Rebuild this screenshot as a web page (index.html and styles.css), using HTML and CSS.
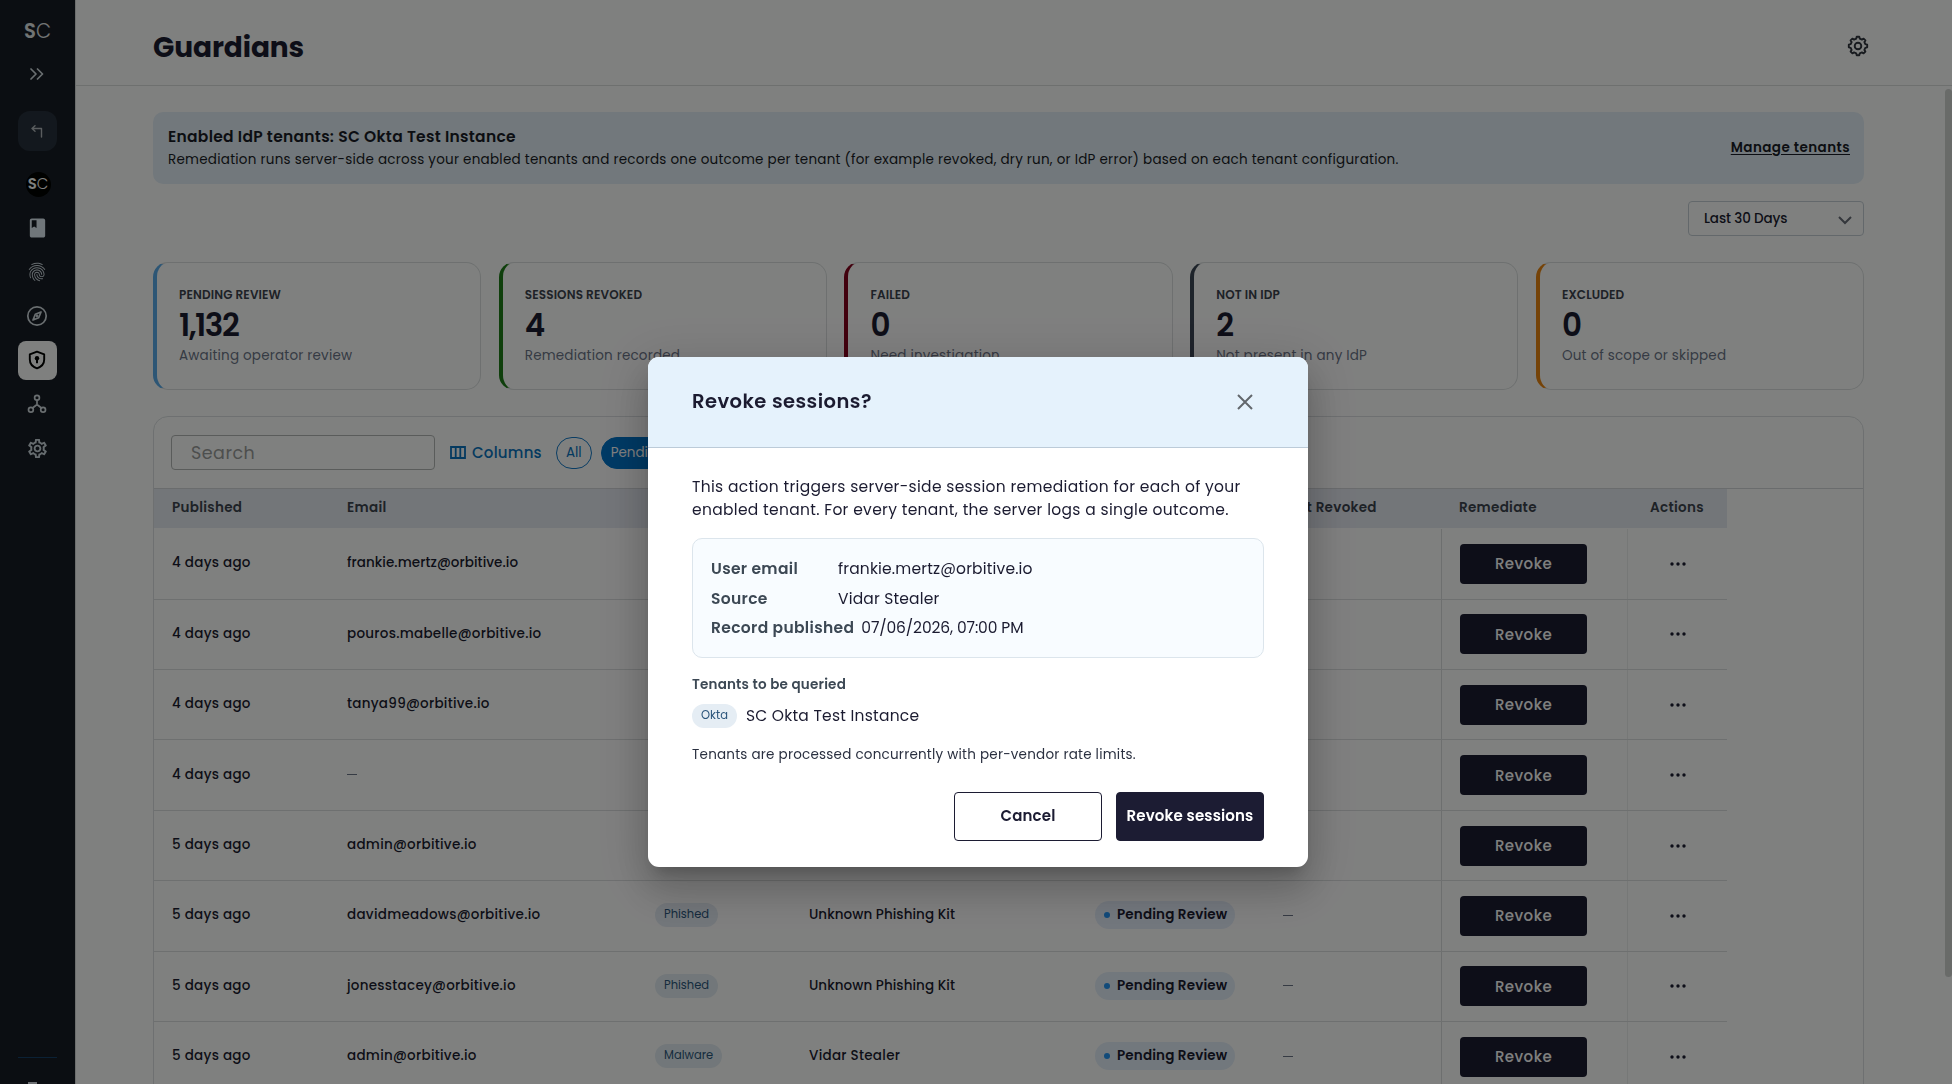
FILE: index.html
```html
<!DOCTYPE html>
<html lang="en">
<head>
<meta charset="utf-8">
<title>Guardians</title>
<link rel="stylesheet" href="styles.css">
</head>
<body>
<svg class="defs" width="0" height="0">
  <symbol id="dots" viewBox="0 0 16 6"><circle cx="2" cy="3" r="1.7"/><circle cx="8" cy="3" r="1.7"/><circle cx="14" cy="3" r="1.7"/></symbol>
</svg>
<div class="app">
  <nav class="sidebar">
    <div class="nav-item"><span class="logo"><b>S</b>C</span></div>
    <div class="nav-item">
      <svg width="14" height="12" viewBox="0 0 14 12" class="line"><path d="M1 1l5 5-5 5M7.500 1l5 5-5 5"/></svg>
    </div>
    <div class="nav-back">
      <svg width="12" height="13" viewBox="0 0 12 13" class="line thin"><path d="M4 .8L1 3.500l3 2.700M1 3.500h9.500V12"/></svg>
    </div>
    <div class="nav-item"><span class="org"><span class="logo small"><b>S</b>C</span></span></div>
    <div class="nav-item"><svg width="23" height="24" viewBox="0 0 24 24" class="fill book"><path d="M18 2H6c-1.100 0-2 .9-2 2v16c0 1.100.9 2 2 2h12c1.100 0 2-.9 2-2V4c0-1.100-.9-2-2-2zM6 4h5v8l-2.500-1.500L6 12V4z"/></svg></div>
    <div class="nav-item"><svg width="22" height="22" viewBox="0 0 24 24" class="fill"><path d="M17.81 4.47c-.08 0-.16-.02-.23-.06C15.66 3.42 14 3 12.01 3c-1.98 0-3.86.47-5.57 1.41-.24.13-.54.04-.68-.2-.13-.24-.04-.55.2-.68C7.82 2.52 9.86 2 12.01 2c2.13 0 3.99.47 6.03 1.52.25.13.34.43.21.67-.09.18-.26.28-.44.28zM3.5 9.72c-.1 0-.2-.03-.29-.09-.23-.16-.28-.47-.12-.7.99-1.4 2.25-2.5 3.75-3.27C9.98 4.04 14 4.03 17.15 5.65c1.5.77 2.76 1.86 3.75 3.25.16.22.11.54-.12.7-.23.16-.54.11-.7-.12-.9-1.26-2.04-2.25-3.39-2.94-2.87-1.47-6.54-1.47-9.4.01-1.36.7-2.5 1.7-3.4 2.96-.08.14-.23.21-.39.21zm6.25 12.07c-.13 0-.26-.05-.35-.15-.87-.87-1.34-1.43-2.01-2.64-.69-1.23-1.05-2.73-1.05-4.34 0-2.97 2.54-5.39 5.66-5.39s5.66 2.42 5.66 5.39c0 .28-.22.5-.5.5s-.5-.22-.5-.5c0-2.42-2.09-4.39-4.66-4.39-2.57 0-4.66 1.97-4.66 4.39 0 1.44.32 2.77.93 3.85.64 1.15 1.08 1.64 1.85 2.42.19.2.19.51 0 .71-.11.1-.24.15-.37.15zm7.17-1.85c-1.19 0-2.24-.3-3.1-.89-1.49-1.01-2.38-2.65-2.38-4.39 0-.28.22-.5.5-.5s.5.22.5.5c0 1.41.72 2.74 1.94 3.56.71.48 1.54.71 2.54.71.24 0 .64-.03 1.04-.1.27-.05.53.13.58.41.05.27-.13.53-.41.58-.57.11-1.07.12-1.21.12zM14.91 22c-.04 0-.09-.01-.13-.02-1.59-.44-2.63-1.03-3.72-2.1-1.4-1.39-2.17-3.24-2.17-5.22 0-1.62 1.38-2.94 3.08-2.94 1.7 0 3.08 1.32 3.08 2.94 0 1.07.93 1.94 2.08 1.94s2.08-.87 2.08-1.94c0-3.77-3.25-6.83-7.25-6.83-2.84 0-5.44 1.58-6.61 4.03-.39.81-.59 1.76-.59 2.8 0 .78.07 2.01.67 3.61.1.26-.03.55-.29.64-.26.1-.55-.04-.64-.29-.49-1.31-.73-2.61-.73-3.96 0-1.2.23-2.29.68-3.24 1.33-2.79 4.28-4.6 7.51-4.6 4.55 0 8.25 3.51 8.25 7.83 0 1.62-1.38 2.94-3.08 2.94s-3.08-1.32-3.08-2.94c0-1.07-.93-1.94-2.08-1.94s-2.08.87-2.08 1.94c0 1.71.66 3.31 1.87 4.51.95.94 1.86 1.46 3.27 1.85.27.07.42.35.35.61-.05.23-.26.38-.47.38z"/></svg></div>
    <div class="nav-item"><svg width="22" height="22" viewBox="0 0 22 22" class="line"><circle cx="11" cy="11" r="9.200"/><path d="M15 7l-2.300 5.700L7 15l2.300-5.700z"/><circle cx="11" cy="11" r=".6"/></svg></div>
    <div class="nav-item"><span class="active"><svg width="18" height="20" viewBox="0 0 18 20" class="shield"><path class="outline" d="M9 1.600L1.800 4.400v5.200c0 4 2.900 7.400 7.200 8.700 4.300-1.300 7.200-4.700 7.200-8.700V4.400z"/><circle cx="9" cy="8.300" r="2.200"/><path d="M8 9h2v4.300H8z"/></svg></span></div>
    <div class="nav-item"><svg width="20" height="20" viewBox="0 0 20 20" class="line"><circle cx="10" cy="3.700" r="2.400"/><circle cx="3.900" cy="15.700" r="2.400"/><circle cx="16.100" cy="15.700" r="2.400"/><path d="M10 6.200v4.300M5.600 14L10 10.500l4.400 3.500"/></svg></div>
    <div class="nav-item"><svg width="23" height="23" viewBox="0 0 24 24" class="fill"><path d="M19.43 12.98c.04-.32.07-.64.07-.98 0-.34-.03-.66-.07-.98l2.11-1.65c.19-.15.24-.42.12-.64l-2-3.46c-.09-.16-.26-.25-.44-.25-.06 0-.12.01-.17.03l-2.49 1c-.52-.4-1.08-.73-1.69-.98l-.38-2.65C14.46 2.18 14.25 2 14 2h-4c-.25 0-.46.18-.49.42l-.38 2.65c-.61.25-1.17.59-1.69.98l-2.49-1c-.06-.02-.12-.03-.18-.03-.17 0-.34.09-.43.25l-2 3.46c-.13.22-.07.49.12.64l2.11 1.65c-.04.32-.07.65-.07.98 0 .33.03.66.07.98l-2.11 1.65c-.19.15-.24.42-.12.64l2 3.46c.09.16.26.25.44.25.06 0 .12-.01.17-.03l2.49-1c.52.4 1.08.73 1.69.98l.38 2.65c.03.24.24.42.49.42h4c.25 0 .46-.18.49-.42l.38-2.65c.61-.25 1.17-.59 1.69-.98l2.49 1c.06.02.12.03.18.03.17 0 .34-.09.43-.25l2-3.46c.12-.22.07-.49-.12-.64l-2.11-1.65zm-1.98-1.71c.04.31.05.52.05.73 0 .21-.02.43-.05.73l-.14 1.13.89.7 1.08.84-.7 1.21-1.27-.51-1.04-.42-.9.68c-.43.32-.84.56-1.25.73l-1.06.43-.16 1.13-.2 1.35h-1.4l-.19-1.35-.16-1.13-1.06-.43c-.43-.18-.83-.41-1.23-.71l-.91-.7-1.06.43-1.27.51-.7-1.21 1.08-.84.89-.7-.14-1.13c-.03-.31-.05-.54-.05-.74s.02-.43.05-.73l.14-1.13-.89-.7-1.08-.84.7-1.21 1.27.51 1.04.42.9-.68c.43-.32.84-.56 1.25-.73l1.06-.43.16-1.13.2-1.35h1.39l.19 1.35.16 1.13 1.06.43c.43.18.83.41 1.23.71l.91.7 1.06-.43 1.27-.51.7 1.21-1.07.85-.89.7.14 1.13zM12 8c-2.21 0-4 1.79-4 4s1.79 4 4 4 4-1.79 4-4-1.79-4-4-4zm0 6c-1.1 0-2-.9-2-2s.9-2 2-2 2 .9 2 2-.9 2-2 2z"/></svg></div>
    <div class="nav-foot"><span class="foot-mark"></span></div>
  </nav>

  <div class="page">
    <header class="page-head">
      <h1>Guardians</h1>
      <svg width="22" height="22" viewBox="-11 -11 22 22" class="head-gear"><path d="M-1.800-7.300L-1.300-9.200H1.300L1.800-7.300L3.900-6.400L5.600-7.400L7.400-5.600L6.400-3.900L7.300-1.800L9.200-1.300V1.300L7.300 1.800L6.400 3.900L7.400 5.600L5.600 7.400L3.900 6.400L1.800 7.300L1.300 9.200H-1.300L-1.800 7.300L-3.900 6.400L-5.600 7.400L-7.400 5.600L-6.400 3.900L-7.300 1.800L-9.200 1.300V-1.300L-7.300-1.800L-6.400-3.900L-7.400-5.600L-5.600-7.400L-3.900-6.400Z"/><circle r="3.300"/></svg>
    </header>
    <main class="content">
      <section class="banner">
        <div>
          <h2>Enabled IdP tenants: SC Okta Test Instance</h2>
          <p>Remediation runs server-side across your enabled tenants and records one outcome per tenant (for example revoked, dry run, or IdP error) based on each tenant configuration.</p>
        </div>
        <a class="manage">Manage tenants</a>
      </section>
      <div class="range-row">
        <div class="select"><span>Last 30 Days</span><svg width="14" height="9" viewBox="0 0 14 9"><path d="M1 1l6 6 6-6"/></svg></div>
      </div>
      <section class="cards">
        <article class="card blue"><h3>Pending Review</h3><strong class="many">1,132</strong><p>Awaiting operator review</p></article>
        <article class="card green"><h3>Sessions Revoked</h3><strong>4</strong><p>Remediation recorded</p></article>
        <article class="card red"><h3>Failed</h3><strong>0</strong><p>Need investigation</p></article>
        <article class="card slate"><h3>Not in IdP</h3><strong>2</strong><p>Not present in any IdP</p></article>
        <article class="card orange"><h3>Excluded</h3><strong>0</strong><p>Out of scope or skipped</p></article>
      </section>
      <section class="panel">
        <div class="toolbar">
          <div class="search">Search</div>
          <div class="columns"><svg width="16" height="13" viewBox="0 0 16 13"><path d="M1 1h14v11H1zM5.700 1v11M10.300 1v11"/></svg>Columns</div>
          <span class="chip">All</span>
          <span class="chip on">Pending Review</span>
        </div>
        <div class="table">
          <div class="tr th"><span>Published</span><span>Email</span><span>Type</span><span>Source</span><span>Status</span><span>Last Revoked</span><span>Remediate</span><span class="mid">Actions</span></div>
          <div class="tr"><span>4 days ago</span><span class="tight">frankie.mertz@orbitive.io</span><span></span><span></span><span></span><span></span><span class="rule"><button>Revoke</button></span><span class="rule faint mid"><svg width="16" height="6"><use href="#dots"/></svg></span></div>
          <div class="tr"><span>4 days ago</span><span>pouros.mabelle@orbitive.io</span><span></span><span></span><span></span><span></span><span class="rule"><button>Revoke</button></span><span class="rule faint mid"><svg width="16" height="6"><use href="#dots"/></svg></span></div>
          <div class="tr"><span>4 days ago</span><span>tanya99@orbitive.io</span><span></span><span></span><span></span><span></span><span class="rule"><button>Revoke</button></span><span class="rule faint mid"><svg width="16" height="6"><use href="#dots"/></svg></span></div>
          <div class="tr"><span>4 days ago</span><span><i class="dash"></i></span><span></span><span></span><span></span><span></span><span class="rule"><button>Revoke</button></span><span class="rule faint mid"><svg width="16" height="6"><use href="#dots"/></svg></span></div>
          <div class="tr"><span>5 days ago</span><span>admin@orbitive.io</span><span></span><span></span><span></span><span></span><span class="rule"><button>Revoke</button></span><span class="rule faint mid"><svg width="16" height="6"><use href="#dots"/></svg></span></div>
          <div class="tr"><span>5 days ago</span><span>davidmeadows@orbitive.io</span><span><em class="tag">Phished</em></span><span class="tight">Unknown Phishing Kit</span><span><em class="status">Pending Review</em></span><span><i class="dash"></i></span><span class="rule"><button>Revoke</button></span><span class="rule faint mid"><svg width="16" height="6"><use href="#dots"/></svg></span></div>
          <div class="tr"><span>5 days ago</span><span>jonesstacey@orbitive.io</span><span><em class="tag">Phished</em></span><span class="tight">Unknown Phishing Kit</span><span><em class="status">Pending Review</em></span><span><i class="dash"></i></span><span class="rule"><button>Revoke</button></span><span class="rule faint mid"><svg width="16" height="6"><use href="#dots"/></svg></span></div>
          <div class="tr"><span>5 days ago</span><span>admin@orbitive.io</span><span><em class="tag">Malware</em></span><span>Vidar Stealer</span><span><em class="status">Pending Review</em></span><span><i class="dash"></i></span><span class="rule"><button>Revoke</button></span><span class="rule faint mid"><svg width="16" height="6"><use href="#dots"/></svg></span></div>
        </div>
      </section>
    </main>
    <div class="scroll-thumb"></div>
  </div>
</div>

<div class="overlay">
  <section class="modal">
    <header class="modal-head">
      <h2>Revoke sessions?</h2>
      <svg width="18" height="18" viewBox="0 0 18 18"><path d="M2 2l14 14M16 2L2 16"/></svg>
    </header>
    <div class="modal-body">
      <p class="lead">This action triggers server-side session remediation for each of your<br>enabled tenant. For every tenant, the server logs a single outcome.</p>
      <dl class="facts">
        <div><dt>User email</dt><dd>frankie.mertz@orbitive.io</dd></div>
        <div><dt>Source</dt><dd>Vidar Stealer</dd></div>
        <div><dt>Record published</dt><dd class="date">07/06/2026, 07:00 PM</dd></div>
      </dl>
      <h3>Tenants to be queried</h3>
      <div class="tenant"><em class="tag">Okta</em><span>SC Okta Test Instance</span></div>
      <p class="note">Tenants are processed concurrently with per-vendor rate limits.</p>
      <div class="actions"><button class="btn">Cancel</button><button class="btn primary">Revoke sessions</button></div>
    </div>
  </section>
</div>
</body>
</html>
```
FILE: styles.css
```css
* { box-sizing: border-box; }
html, body { margin: 0; height: 100%; overflow: hidden; }
body {
  font-family: Poppins, Inter, sans-serif;
  font-size: 13.5px;
  letter-spacing: .24px;
  color: #1b1b30;
  background: #fff;
}
h1, h2, h3, p, dl, dd { margin: 0; }
em, i { font-style: normal; }
svg { display: block; flex: none; }
.defs { position: absolute; }
button { font-family: inherit; border: 0; padding: 0; }

.app { display: flex; height: 1084px; }

/* Sidebar */
.sidebar {
  width: 76px; flex: none;
  display: flex; flex-direction: column;
  padding-top: 8px;
  background: #171b25;
  border-right: 1px solid #d8dada;
  color: #e6eaf0;
}
.nav-item { height: 44px; width: 74px; display: flex; align-items: center; justify-content: center; }
.logo { font-size: 21px; line-height: 21px; font-weight: 300; letter-spacing: 0; color: #e2e6e8; transform: scaleX(.93); }
.logo b { font-weight: 600; }
.logo.small { font-size: 16px; line-height: 16px; color: #fff; }
.org { width: 25px; height: 25px; margin-left: 3px; border-radius: 50%; background: #000; display: flex; align-items: center; justify-content: center; }
.line { fill: none; stroke: #d3dae0; stroke-width: 1.7; stroke-linejoin: round; stroke-linecap: round; }
.line.thin { stroke-width: 1.4; stroke: #b4b8be; }
.fill { fill: #cdd6de; }
.book { fill: #e0eaf4; }
.nav-back { width: 39px; height: 40px; margin: 15px 0 11px 18px; flex: none; border-radius: 12px; background: #272f3c; display: flex; align-items: center; justify-content: center; padding-right: 2px; }
.active { width: 39px; height: 39px; margin-left: 1px; border-radius: 8px; background: #fff; display: flex; align-items: center; justify-content: center; padding-right: 1px; }
.shield { fill: #000; }
.shield .outline { fill: none; stroke: #000; stroke-width: 1.9; stroke-linejoin: round; }
.nav-foot { margin: auto 18px 0; width: 39px; height: 27px; border-top: 1px solid #16406a; display: flex; align-items: flex-end; }
.foot-mark { width: 9px; height: 2px; margin-left: 10px; background: #d8dde4; }

/* Page */
.page { flex: 1; display: flex; flex-direction: column; position: relative; min-width: 0; }
.page-head { height: 86px; flex: none; display: flex; align-items: center; justify-content: space-between; padding: 6px 82px 0 77px; border-bottom: 1px solid #dddfdf; }
h1 { font-size: 28px; line-height: 36px; font-weight: 700; letter-spacing: -.1px; padding-top: 4px; }
.head-gear { fill: none; stroke: #30343e; stroke-width: 1.9; stroke-linejoin: round; margin-right: 1px; }
.content { flex: 1; min-height: 0; padding: 26px 88px 0 77px; }
.scroll-thumb { position: absolute; right: 0; top: 89px; width: 7px; height: 888px; border-radius: 4px 4px 4px 4px; background: #d2d4d3; }

.banner { height: 72px; padding: 0 15px; display: flex; align-items: center; justify-content: space-between; border-radius: 10px; background: #e5eff8; color: #191b26; }
.banner h2 { font-size: 15.5px; line-height: 22px; font-weight: 600; letter-spacing: .28px; }
.banner p { line-height: 20px; margin-top: 2px; letter-spacing: .245px; }
.manage { font-weight: 600; letter-spacing: .43px; margin-right: -1px; text-decoration: underline; text-underline-offset: 2px; }

.range-row { margin-top: 17px; display: flex; justify-content: flex-end; }
.select { width: 176px; height: 35px; padding: 0 11px 0 15px; display: flex; align-items: center; justify-content: space-between; border: 1px solid #c6ced6; border-radius: 4px; font-weight: 500; letter-spacing: -.12px; }
.select svg { fill: none; stroke: #686c78; stroke-width: 2; margin-top: 3px; }

.cards { margin-top: 26px; display: grid; grid-template-columns: repeat(5, 1fr); gap: 17.6px; }
.card { height: 128px; padding: 24px 22px 0; border: 1px solid #dcdfe0; border-left-width: 4px; border-radius: 15px; }
.card h3 { font-size: 12px; line-height: 16px; font-weight: 600; letter-spacing: .15px; text-transform: uppercase; color: #3c424e; }
.card strong { display: block; margin-top: 2px; font-size: 31px; line-height: 40px; font-weight: 600; letter-spacing: 0; }
.card .many { letter-spacing: -1.5px; }
.card p { margin-top: 1px; line-height: 20px; color: #6c7488; letter-spacing: .2px; }
.blue { border-left-color: #5aaaea; }
.green { border-left-color: #1f7d18; }
.red { border-left-color: #84001c; }
.slate { border-left-color: #3c4656; }
.orange { border-left-color: #ea8410; }

.panel { margin-top: 26px; height: 800px; border: 1px solid #dcdfe2; border-radius: 15px; }
.toolbar { height: 72px; padding: 0 17px; display: flex; align-items: center; border-bottom: 1px solid #d4d7db; }
.search { width: 264px; height: 35px; padding-left: 19px; border: 1px solid #b4b6b6; border-radius: 4px; font-size: 17.5px; line-height: 34px; letter-spacing: .5px; color: #9b9c9c; }
.columns { margin-left: 15px; display: flex; align-items: center; gap: 6px; font-size: 15px; font-weight: 500; letter-spacing: .24px; color: #0972c0; }
.columns svg { fill: none; stroke: #0972c0; stroke-width: 1.8; }
.chip { margin-left: 14px; height: 32px; padding: 0 9px; border: 1px solid #1479c8; border-radius: 16px; line-height: 29px; color: #0972c0; letter-spacing: 0; }
.chip.on { margin-left: 9px; background: #0074ca; border-color: #0074ca; color: #fff; }

.table { width: 1573px; }
.tr { height: 70.4px; display: grid; grid-template-columns: 175px 308px 154px 286px 188px 176px 186px 100px; border-bottom: 1px solid #dcdfe0; font-weight: 500; letter-spacing: .27px; }
.tr > span { padding-left: 18px; padding-bottom: 1px; display: flex; align-items: center; }
.tr > .tight { letter-spacing: .06px; }
.tr > .mid { padding: 0; justify-content: center; }
.tr > .rule { border-left: 1px solid #dadddf; padding-bottom: 0; }
.tr > .faint { border-left-color: #eceeee; }
.tr.th { height: 39px; margin-bottom: 1.300px; border-bottom: 0; background: #e7ebf3; font-weight: 600; color: #3c434e; letter-spacing: .3px; }
.tr.th > span { padding-bottom: 2px; }
.tr svg { fill: #1b1b30; }
.tr button { width: 127px; height: 40px; border-radius: 4px; background: #1a1a30; color: #fff; font-size: 15px; font-weight: 500; letter-spacing: .45px; }
.dash { width: 10px; height: 1px; background: #6c7488; }
.tag { height: 24px; padding: 0 9px; border-radius: 12px; background: #e5edf4; color: #2c567c; font-size: 11.5px; line-height: 23px; font-weight: 400; letter-spacing: 0; }
.status { height: 28px; padding: 0 8px 0 9px; display: flex; align-items: center; gap: 7px; border-radius: 14px; background: #e5eefa; font-weight: 600; letter-spacing: .15px; }
.status::before { content: ""; width: 6px; height: 6px; border-radius: 50%; background: #2494f4; }

/* Dialog */
.overlay { position: fixed; inset: 0; padding-left: 4px; display: flex; justify-content: center; align-items: flex-start; background: rgba(0, 2, 0, .5); }
.modal {
  width: 660px; height: 510px; margin-top: 357px;
  border-radius: 11px; overflow: hidden; background: #fff;
  box-shadow: 0 11px 15px -7px rgba(0, 0, 0, .2), 0 24px 38px 3px rgba(0, 0, 0, .14), 0 9px 46px 8px rgba(0, 0, 0, .12);
}
.modal-head { height: 91px; padding: 0 54px 2px 44px; display: flex; align-items: center; justify-content: space-between; background: #e5f2fc; border-bottom: 1px solid #bccbd8; }
.modal-head h2 { font-size: 19.5px; font-weight: 600; letter-spacing: .46px; }
.modal-head svg { fill: none; stroke: #62676c; stroke-width: 2; margin-top: 2px; }
.modal-body { padding: 27px 44px 0; font-size: 15.5px; }
.lead { line-height: 23.2px; letter-spacing: .32px; white-space: nowrap; }
.facts { height: 120px; margin-top: 17px; padding: 18px 18px 0; display: flex; flex-direction: column; gap: 6px; border: 1px solid #dce5ec; border-radius: 10px; background: #f8fcff; line-height: 23.5px; }
.facts div { display: flex; gap: 7px; }
.facts dt { min-width: 120px; font-weight: 600; color: #3c4854; letter-spacing: .34px; }
.facts dd { letter-spacing: .17px; }
.facts .date { letter-spacing: -.12px; }
.modal-body h3 { margin-top: 17px; font-size: 13.5px; line-height: 20px; font-weight: 600; letter-spacing: .2px; color: #3c4854; }
.tenant { margin-top: 9px; display: flex; align-items: center; gap: 9px; line-height: 24px; letter-spacing: .24px; }
.note { margin-top: 17px; font-size: 13.5px; line-height: 20px; letter-spacing: .23px; color: #2a3040; }
.actions { margin-top: 27px; display: flex; justify-content: flex-end; gap: 14px; }
.btn { width: 148px; height: 49px; padding-bottom: 2px; border: 1px solid #1c1c33; border-radius: 4px; background: #fff; color: #1c1c33; font-size: 15px; font-weight: 600; letter-spacing: .15px; }
.btn.primary { background: #1c1c33; color: #fff; }
```
